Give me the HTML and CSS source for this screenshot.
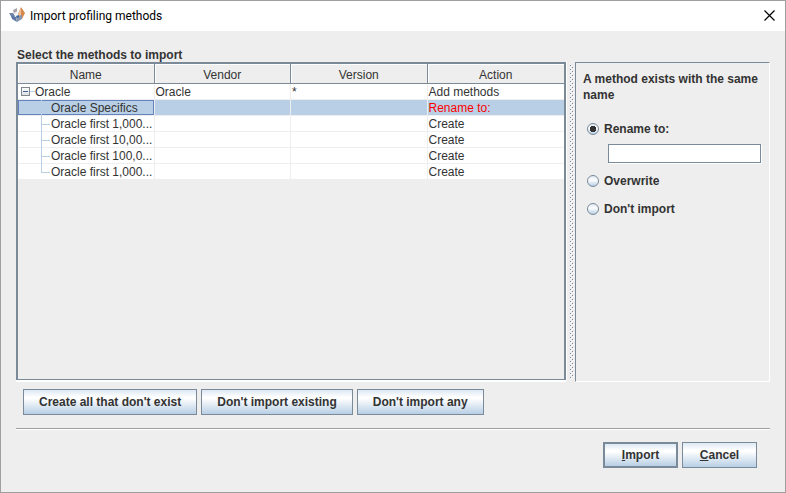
FILE: index.html
```html
<!DOCTYPE html>
<html lang="en">
<head>
    <meta charset="UTF-8">
    <meta name="viewport" content="width=device-width, initial-scale=1.0">
    <title>Import profiling methods</title>
    <link rel="stylesheet" href="styles.css">
</head>
<body>
    <div class="dialog">
        <header class="titlebar">
            <svg class="app-icon" width="16" height="16" viewBox="0 0 16 16">
                <path d="M0 6l4 0 2 3-3 2z" fill="#6f86a8"/>
                <path d="M4 3l4-2 0 4-3 2z" fill="#a9a3ab"/>
                <path d="M5 6l4-2 2 4-4 2z" fill="#f2f4f8"/>
                <path d="M12 0l4 6-3 6-4-5z" fill="#d58a4c"/>
                <path d="M12 1l0 8-3-2z" fill="#edc09b"/>
                <path d="M2 8l5 2 1 5-5-3z" fill="#5b78a5"/>
                <path d="M7 10l6-2 0 4-5 3z" fill="#8796ac"/>
                <path d="M7 9l3-1 0 2-2 1z" fill="#3f5f96"/>
            </svg>
            <h1 class="title">Import profiling methods</h1>
            <button class="close" type="button" aria-label="Close">
                <svg width="11" height="11" viewBox="0 0 11 11"><path d="M.5.5l10 10M10.5.5l-10 10" stroke="#000" stroke-width="1.2"/></svg>
            </button>
        </header>
        <form class="content">
            <h2 class="caption" id="caption">Select the methods to import</h2>
            <div class="split">
                <div class="table-pane">
                    <table class="methods" aria-labelledby="caption">
                        <thead>
                            <tr><th>Name</th><th>Vendor</th><th>Version</th><th>Action</th></tr>
                        </thead>
                        <tbody>
                            <tr>
                                <td><div class="node root"><button class="toggle" type="button" aria-label="Collapse Oracle"><svg width="9" height="9" viewBox="0 0 9 9"><path d="M2 4.5h5" stroke="#3f5f96"/></svg></button><span class="stub"></span>Oracle</div></td>
                                <td>Oracle</td><td>*</td><td>Add methods</td>
                            </tr>
                            <tr class="selected">
                                <td><div class="node"><span class="branch"></span>Oracle Specifics</div></td>
                                <td></td><td></td><td class="conflict">Rename to:</td>
                            </tr>
                            <tr>
                                <td><div class="node"><span class="branch"></span>Oracle first 1,000...</div></td>
                                <td></td><td></td><td>Create</td>
                            </tr>
                            <tr>
                                <td><div class="node"><span class="branch"></span>Oracle first 10,00...</div></td>
                                <td></td><td></td><td>Create</td>
                            </tr>
                            <tr>
                                <td><div class="node"><span class="branch"></span>Oracle first 100,0...</div></td>
                                <td></td><td></td><td>Create</td>
                            </tr>
                            <tr>
                                <td><div class="node"><span class="branch last"></span>Oracle first 1,000...</div></td>
                                <td></td><td></td><td>Create</td>
                            </tr>
                        </tbody>
                    </table>
                </div>
                <div class="divider"></div>
                <fieldset class="options">
                    <legend class="hidden">Conflict</legend>
                    <p class="message">A method exists with the same name</p>
                    <label class="option"><input type="radio" name="conflict" checked>Rename to:</label>
                    <input class="new-name" type="text" aria-label="New name">
                    <label class="option"><input type="radio" name="conflict">Overwrite</label>
                    <label class="option"><input type="radio" name="conflict">Don't import</label>
                </fieldset>
            </div>
            <div class="bulk">
                <button class="btn" type="button">Create all that don't exist</button>
                <button class="btn" type="button">Don't import existing</button>
                <button class="btn" type="button">Don't import any</button>
            </div>
            <div class="actions">
                <button class="btn default" type="button"><u>I</u>mport</button>
                <button class="btn" type="button"><u>C</u>ancel</button>
            </div>
        </form>
    </div>
</body>
</html>
```
FILE: styles.css
```css
* {
    box-sizing: border-box;
}
body {
    margin: 0;
    font: 12px/16px "Liberation Sans", Arial, sans-serif;
    color: #333;
}
.dialog {
    display: flex;
    flex-direction: column;
    min-height: 100vh;
    border: 1px solid #9f9f9f;
    background: #eee;
}

/* Title bar */
.titlebar {
    display: flex;
    align-items: center;
    height: 30px;
    padding: 0 10px 2px 8px;
    background: #fff;
}
.title {
    flex: 1;
    margin: 2px 0 0 5px;
    font: 12px/16px Roboto, "Segoe UI", sans-serif;
    color: #000;
}
.close {
    display: flex;
    padding: 0;
    border: 0;
    background: none;
}

.content {
    display: flex;
    flex: 1;
    flex-direction: column;
    padding: 17px 15px 23px;
}
.caption {
    margin: 0 1px;
    font-size: 12px;
    line-height: 14px;
}
.split {
    display: grid;
    flex: 1;
    grid-template-columns: minmax(0, 1fr) 8px 195px;
}

/* Methods table */
.table-pane {
    margin: 0 1px 2px 0;
    border: solid #7a8a99;
    border-width: 2px 2px 1px;
    box-shadow: 1px 0 #fff, 0 2px #fff;
}
.methods {
    width: 100%;
    table-layout: fixed;
    border-collapse: separate;
    border-spacing: 0;
}
th {
    height: 20px;
    padding: 2px 0 0;
    border: solid #7a8a99;
    border-width: 0 1px 1px 0;
    box-shadow: inset 1px 1px #fff;
    font-weight: normal;
    line-height: 16px;
}
td {
    height: 16px;
    padding: 1px 0 0 1px;
    border: solid #eee;
    border-width: 0 1px 1px 0;
    background: #fff;
    line-height: 14px;
    white-space: nowrap;
}
td:first-child {
    padding: 0;
}
th:last-child, td:last-child {
    border-right-width: 0;
}
.node {
    display: flex;
    height: 15px;
    line-height: 16px;
}
.root {
    padding-left: 3px;
}
.toggle {
    display: flex;
    align-self: center;
    width: 9px;
    height: 9px;
    padding: 0;
    border: 0;
    background: linear-gradient(#fff, #ddd);
    box-shadow: inset 0 0 0 1px #808890;
}
.stub {
    align-self: center;
    width: 5px;
    height: 1px;
    background: #b8cfe5;
}
.branch {
    width: 33px;
    height: 16px;
    background:
        linear-gradient(#b8cfe5, #b8cfe5) 23px 0 / 1px 16px no-repeat,
        linear-gradient(#b8cfe5, #b8cfe5) 23px 8px / 9px 1px no-repeat;
}
.last {
    height: 9px;
}
.selected td {
    background: #b8cfe5;
}
.selected td:first-child {
    box-shadow: inset 0 0 0 1px #6382bf;
}
.selected .conflict {
    color: #f00;
}

/* Grip dots */
.divider {
    margin: 3px 1px 3px 3px;
    background:
        conic-gradient(at 1px 1px, transparent 75%, #7a8a99 0) 0 0 / 4px 4px,
        conic-gradient(at 1px 1px, transparent 75%, #7a8a99 0) 2px 2px / 4px 4px,
        conic-gradient(at 1px 1px, transparent 75%, #fff 0) 1px 1px / 4px 4px,
        conic-gradient(at 1px 1px, transparent 75%, #fff 0) 3px 3px / 4px 4px;
}

/* Conflict options */
.options {
    min-width: 0;
    margin: 0;
    padding: 8px 8px 8px 7px;
    border: 1px solid;
    border-color: #7a8a99 #fff #fff #7a8a99;
    font-weight: bold;
}
.hidden {
    display: none;
}
.message {
    margin: 0 0 18px;
}
.option {
    display: flex;
    align-items: center;
    gap: 5px;
    margin-left: 4px;
}
.option + .option {
    margin-top: 12px;
}
.option input {
    width: 12px;
    height: 12px;
    margin: 0;
    appearance: none;
    border: 1px solid #7a8a99;
    border-radius: 50%;
    background: linear-gradient(#dde8f3, #fff 40%, #b8cfe5);
}
.option input:checked {
    background: radial-gradient(circle, #333 3px, transparent 3px), linear-gradient(#dde8f3, #fff 40%, #b8cfe5);
}
.new-name {
    display: block;
    width: calc(100% - 25px);
    height: 19px;
    margin: 7px 0 10px 25px;
    padding: 0 2px;
    border: 1px solid #7a8a99;
    background: #fff;
    box-shadow: 1px 1px #fff;
    font: inherit;
}

/* Buttons */
.btn {
    height: 26px;
    padding: 0 15px;
    border: 1px solid #7a8a99;
    background: linear-gradient(#dde8f3, #fff 30%, #fff 35%, #b8cfe5);
    color: #333;
    font: bold 12px/16px "Liberation Sans", Arial, sans-serif;
}
.default {
    border-width: 2px;
}
.bulk {
    display: flex;
    gap: 4px;
    padding: 7px 7px 13px;
    border-bottom: 1px solid #a0a0a0;
}
.actions {
    display: flex;
    justify-content: flex-end;
    gap: 4px;
    padding: 12px 13px 1px;
    border-top: 1px solid #fff;
}
.actions .btn {
    width: 75px;
    padding: 0;
}
```
